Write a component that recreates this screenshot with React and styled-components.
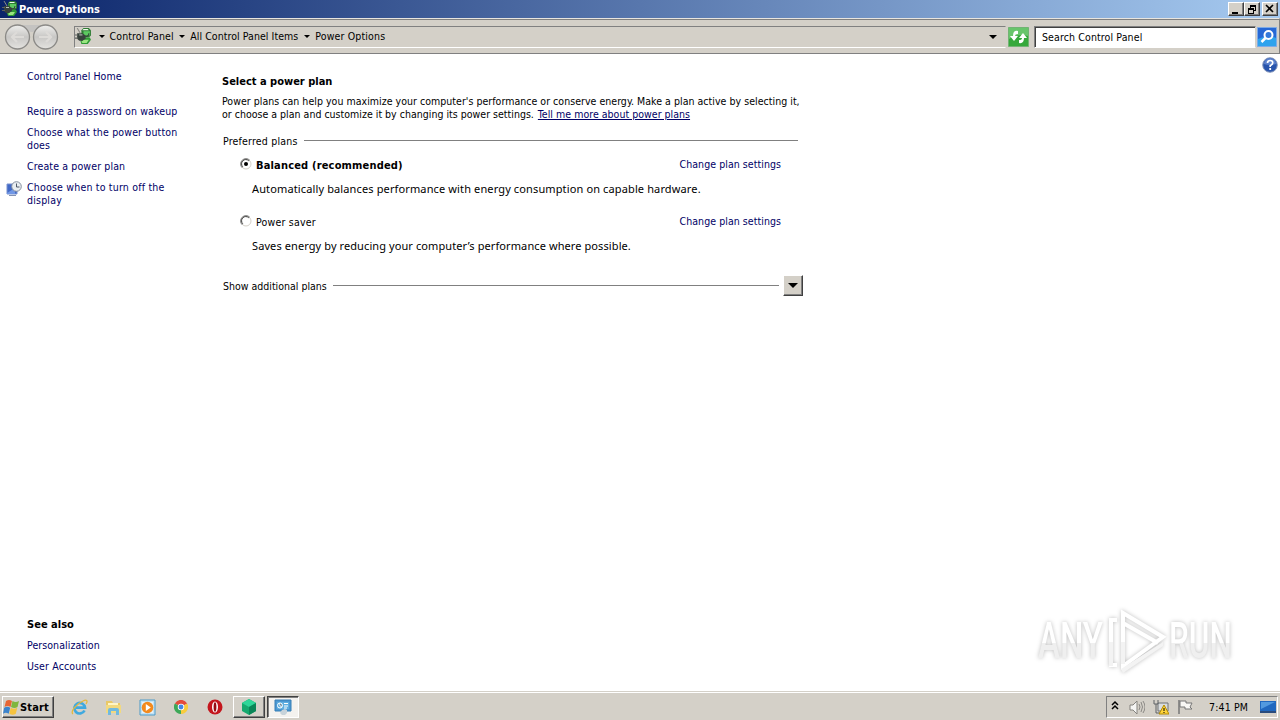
import React from "react";
import styled, { createGlobalStyle, css } from "styled-components";

const GlobalStyle = createGlobalStyle`
  * {
    box-sizing: border-box;
  }
  body {
    margin: 0;
    overflow: hidden;
    background: #fff;
    color: #000;
    font-family: "DejaVu Sans Condensed", "DejaVu Sans", sans-serif;
    font-size: 10.5px;
    line-height: 13px;
  }
`;

const raised = css`
  background: #d4d0c8;
  border: 1px solid;
  border-color: #fff #404040 #404040 #fff;
  box-shadow: inset -1px -1px 0 #808080;
`;

const Window = styled.div`
  display: flex;
  flex-direction: column;
  width: 1280px;
  height: 720px;
  position: relative;
`;

const TitleBar = styled.div`
  display: flex;
  align-items: center;
  height: 18px;
  padding: 0 2px;
  color: #fff;
  background: linear-gradient(to right, #0a246a, #a6caf0);
`;

const Text = styled.span`
  display: block;
  white-space: nowrap;
  letter-spacing: ${(props) => props.$spacing || 0}px;
  font-size: ${(props) => (props.$bold ? "11px" : "inherit")};
  font-weight: ${(props) => (props.$bold ? "bold" : "normal")};
`;

const TitleText = styled(Text)`
  flex: 1;
  margin-left: 1px;
`;

const WindowButton = styled.button`
  ${raised}
  width: 16px;
  height: 14px;
  padding: 0;
  margin-left: ${(props) => props.$gap || 0}px;
  display: flex;
  align-items: center;
  justify-content: center;
`;

const Toolbar = styled.div`
  display: flex;
  align-items: center;
  height: 36px;
  padding: 2px 2px 1px 4px;
  background: #d4d0c8;
  border-top: 1px solid #e8e5df;
  border-bottom: 1px solid #808080;
  border-right: 1px solid #808080;
  box-shadow: inset 0 1px 0 #808080;
`;

const NavButtons = styled.svg`
  width: 56px;
  height: 28px;
  margin-right: 14px;
`;

const AddressBar = styled.div`
  display: flex;
  align-items: center;
  width: 932px;
  height: 22px;
  border: 1px solid;
  border-color: #808080 transparent #fff #808080;
`;

const Crumb = styled.div`
  display: flex;
  align-items: center;
`;

const Caret = styled.span`
  width: 0;
  height: 0;
  border: solid transparent;
  border-width: ${(props) => props.$size || 3}px;
  border-top-color: #000;
  border-bottom: 0;
  margin: ${(props) => props.$margin || 0};
`;

const Refresh = styled.svg`
  width: 21px;
  height: 20px;
  margin-left: 2px;
`;

const SearchField = styled.div`
  width: 222px;
  height: 22px;
  margin-left: 5px;
  padding: 4px 7px;
  background: #fff;
  border: 1px solid;
  border-color: #808080 #d4d0c8 #fff #808080;
  box-shadow: inset 1px 1px 0 #404040;
`;

const SearchButton = styled.svg`
  width: 20px;
  height: 20px;
  margin-left: 1px;
`;

const Body = styled.div`
  display: flex;
  flex: 1;
`;

const Sidebar = styled.aside`
  display: flex;
  flex-direction: column;
  width: 222px;
  padding: 16px 0 18px 6px;
  color: #000066;
`;

const TaskLink = styled.div`
  display: flex;
  margin-bottom: ${(props) => props.$after || 8}px;
`;

const IconSlot = styled.div`
  width: 21px;
  height: 13px;
`;

const SeeAlso = styled.div`
  margin-top: auto;
  padding-left: 21px;
  display: flex;
  flex-direction: column;
  gap: 8px;
`;

const Heading = styled(Text)`
  color: #000;
`;

const Main = styled.main`
  width: 582px;
  padding-top: 21px;
`;

const Intro = styled.div`
  margin: 7px 0 13px;
`;

const IntroLine = styled.div`
  display: flex;
`;

const Anchor = styled(Text)`
  color: #000066;
  text-decoration: underline;
  margin-left: ${(props) => props.$indent || 0}px;
`;

const Group = styled.div`
  display: flex;
  align-items: center;
  height: 15px;
  padding: 0 ${(props) => props.$right || 0}px 0 1px;
`;

const Rule = styled.div`
  flex: 1;
  height: 1px;
  margin: 0 0 2px 6px;
  background: #808080;
`;

const Plan = styled.div`
  margin: ${(props) => (props.$first ? 10 : 21)}px 0 0 18px;
`;

const Plans = styled.div`
  margin-bottom: 27px;
`;

const PlanRow = styled.div`
  display: flex;
  align-items: flex-start;
  height: 13px;
`;

const Radio = styled.svg`
  width: 12px;
  height: 12px;
  margin: -1px 4px 0 0;
`;

const ChangeLink = styled(Text)`
  color: #000066;
  margin: -1px 23px 0 auto;
`;

const Description = styled(Text)`
  margin: 10px 0 0 12px;
  font-family: "Noto Sans", sans-serif;
  font-size: 11px;
`;

const ExpandButton = styled.button`
  ${raised}
  display: flex;
  align-items: center;
  justify-content: center;
  width: 20px;
  height: 21px;
  padding: 0;
  margin: 0 0 2px 4px;
`;

const HelpIcon = styled.svg`
  width: 16px;
  height: 16px;
  margin: 3px 2px 0 auto;
`;

const Watermark = styled.div`
  position: absolute;
  left: 1038px;
  top: 606px;
  width: 196px;
  height: 70px;
  display: flex;
  align-items: center;
  filter: drop-shadow(0 0 2px rgba(0, 0, 0, 0.26));
`;

const MarkWord = styled.span`
  flex: none;
  width: 110px;
  margin-right: ${(props) => props.$width - 110}px;
  font-family: Roboto, sans-serif;
  font-size: 50px;
  font-weight: 500;
  line-height: 60px;
  transform: scaleX(${(props) => props.$scale});
  transform-origin: left;
  background: linear-gradient(#fff 53%, #efefef 53%);
  background-clip: text;
  color: transparent;
`;

const MarkLogo = styled.svg`
  width: 64px;
  height: 66px;
  flex: none;
`;

const Taskbar = styled.footer`
  display: flex;
  align-items: center;
  height: 29px;
  padding: 2px 2px 0;
  background: #d4d0c8;
  border-top: 1px solid #d4d0c8;
  box-shadow: inset 0 1px 0 #fff;
`;

const StartButton = styled.button`
  ${raised}
  display: flex;
  align-items: center;
  width: 52px;
  height: 22px;
  padding: 0;
  margin-right: 8px;
  font: inherit;
`;

const TaskItem = styled.div`
  display: flex;
  align-items: center;
  justify-content: center;
  width: 34px;
  height: 22px;
`;

const TaskButton = styled(TaskItem)`
  ${raised}
  width: 32px;
  margin: 0 1px;
  ${(props) =>
    props.$active &&
    css`
      background: #f4f2ef;
      border-color: #404040 #fff #fff #404040;
      box-shadow: inset 1px 1px 0 #808080;
    `}
`;

const Tray = styled.div`
  display: flex;
  align-items: center;
  width: 172px;
  height: 22px;
  margin-left: auto;
  padding: 0 1px 0 4px;
  border: 1px solid;
  border-color: #808080 #fff #fff #808080;
`;

const TrayIcon = styled.svg`
  width: ${(props) => props.$size || 16}px;
  height: 16px;
  margin-right: ${(props) => props.$after || 0}px;
`;

const Clock = styled(Text)`
  flex: 1;
`;

const PowerIcon = ({ size = 16 }) => (
  <svg width={size} height={size} viewBox="0 0 16 16">
    <path d="M6 2l2-2h5l2 2v5l-2 2H6z" fill="#2f7d34" />
    <path d="M8 1h4l1 1H7z" fill="#eef8ea" />
    <path d="M8 3h6v4H8z" fill="#5cc860" />
    <path d="M5 12l3-3h6l1 2-3 4H6z" fill="#2f9a35" />
    <path d="M6 13l2-2h5l-2 3H7z" fill="#9be680" />
    <path d="M2 5h5l3 2v3l-3 2H4l-2-2z" fill="#38423d" />
    <path d="M0 6h3v1H0zM0 9h3v1H0z" fill="#5d605e" />
    <path d="M4 6h3v1H4z" fill="#b7c3b8" />
    <path d="M10 8q3 0 3-3" fill="none" stroke="#38423d" />
    <path d="M2 0l3 5" stroke="#8a8a86" />
  </svg>
);

const DisplayIcon = () => (
  <svg width="16" height="16" viewBox="0 0 16 16">
    <path d="M1 3h10v10H1z" fill="#4169c7" stroke="#7892cf" />
    <path d="M1 12l8-5v6H1z" fill="#7298e5" />
    <path d="M3 14h7v1H3z" fill="#8292b3" />
    <circle cx="10.5" cy="5.5" r="4.8" fill="#e9edf0" stroke="#858f9e" />
    <path d="M10.5 2.5v3.5h3" fill="none" stroke="#4e5968" />
  </svg>
);

const WindowsFlag = () => (
  <svg width="17" height="17" viewBox="0 0 17 17">
    <path d="M3 2q3-2 6 0L7.5 8q-3-2-6 0z" fill="#e76635" />
    <path d="M9.5 2q3 2 6.5 0l-1.5 6q-3 2-6.5 0z" fill="#80b63d" />
    <path d="M1.2 8.7q3-2 6 0l-1.5 6q-3-2-5.7 0z" fill="#3b83cc" />
    <path d="M7.8 8.7q3 2 6.5 0l-1.5 6q-3 2-6.5 0z" fill="#f6c33e" />
  </svg>
);

const ExplorerIE = () => (
  <svg width="17" height="17" viewBox="0 0 17 17">
    <path
      d="M13.5 11.5A5.3 5.3 0 1 1 14 8.7H5"
      fill="none"
      stroke="#3fa9df"
      strokeWidth="2.7"
    />
    <path
      d="M2 15C-1 13 5 5 12 2c4-2 5 0 3 3"
      fill="none"
      stroke="#e4b83c"
      strokeWidth="1.3"
    />
  </svg>
);

const FolderIcon = () => (
  <svg width="17" height="17" viewBox="0 0 17 17">
    <path d="M1 2h6l1 2h7v10H1z" fill="#e9c867" />
    <path d="M3 4h10v8H3z" fill="#fff5c6" />
    <path d="M1 6h15v8H1z" fill="#f2d980" />
    <path d="M3 16v-5q0-2 2-2h7q2 0 2 2v5h-3v-4H6v4z" fill="#71b9df" />
  </svg>
);

const PlayerIcon = () => (
  <svg width="17" height="17" viewBox="0 0 17 17">
    <path d="M1 1h15v15H1z" fill="#c4e2f3" stroke="#4c9bc8" />
    <path d="M3 3h11v11H3z" fill="#e4f2fa" />
    <circle cx="8.5" cy="8.5" r="5.8" fill="#f38a1d" />
    <path d="M6.8 5l5 3.5-5 3.5z" fill="#fff" />
  </svg>
);

const ChromeIcon = () => (
  <svg width="14" height="14" viewBox="0 0 16 16">
    <path d="M8 8L1 4a8 8 0 0 1 14 0z" fill="#e44b3b" />
    <path d="M8 8l7-4a8 8 0 0 1-7 12z" fill="#f8cc3d" />
    <path d="M8 8v8A8 8 0 0 1 1 4z" fill="#3da858" />
    <circle cx="8" cy="8" r="3.7" fill="#fff" />
    <circle cx="8" cy="8" r="2.8" fill="#4387e5" />
  </svg>
);

const OperaIcon = () => (
  <svg width="16" height="16" viewBox="0 0 16 16">
    <circle cx="8" cy="8" r="7.5" fill="#c4161d" />
    <ellipse cx="8" cy="8" rx="3" ry="5.6" fill="#fff" />
    <ellipse cx="8" cy="8" rx="1.4" ry="4.8" fill="#970d13" />
  </svg>
);

const CubeIcon = () => (
  <svg width="16" height="16" viewBox="0 0 16 16">
    <path d="M8 0l7 4v8l-7 4-7-4V4z" fill="#16a96f" />
    <path d="M8 0l7 4-7 4-7-4z" fill="#2fd699" />
    <path d="M8 8l7-4v8l-7 4z" fill="#0a8557" />
  </svg>
);

const ControlPanelIcon = () => (
  <svg width="18" height="18" viewBox="0 0 18 18">
    <path d="M1 2h16v11H1z" fill="#4c98d2" stroke="#367eb6" />
    <path d="M3 4h12v7H3z" fill="#5faee0" />
    <circle cx="6" cy="7.5" r="2.5" fill="none" stroke="#fff" />
    <path d="M6 5v3h2M10 5.5h4M10 8h4M10 10h3" stroke="#fff" />
    <path d="M6 15l2-3 3-1 2 1v3l-2 2H8z" fill="#c8d3da" />
  </svg>
);

const RadioButton = ({ checked = false }) => (
  <Radio viewBox="0 0 12 12">
    <circle cx="6" cy="6" r="5" fill="#fff" stroke="#d4d0c8" />
    <path d="M2.2 9.8A5.3 5.3 0 0 1 9.8 2.2" fill="none" stroke="#808080" />
    <path d="M2.8 8.8A4.2 4.2 0 0 1 8.8 2.8" fill="none" stroke="#404040" />
    {checked && <circle cx="6" cy="6" r="2" />}
  </Radio>
);

const tasks = [
  { lines: ["Control Panel Home"], after: 22, spacing: 0.06 },
  { lines: ["Require a password on wakeup"], spacing: 0.13 },
  { lines: ["Choose what the power button", "does"], spacing: 0.16 },
  { lines: ["Create a power plan"], spacing: 0.13 },
  {
    lines: ["Choose when to turn off the", "display"],
    spacing: 0.2,
    icon: <DisplayIcon />,
  },
];

const PlanOption = ({
  name,
  description,
  checked,
  spacing,
  descSpacing,
}) => (
  <Plan $first={checked}>
    <PlanRow>
      <RadioButton checked={checked} />
      <Text $bold={checked} $spacing={spacing}>
        {name}
      </Text>
      <ChangeLink $spacing={0.06}>Change plan settings</ChangeLink>
    </PlanRow>
    <Description $spacing={descSpacing}>{description}</Description>
  </Plan>
);

const App = () => (
  <Window>
    <GlobalStyle />
    <TitleBar>
      <PowerIcon />
      <TitleText $bold $spacing={-0.05}>
        Power Options
      </TitleText>
      <WindowButton>
        <svg width="10" height="9">
          <path d="M1 7h6v2H1z" />
        </svg>
      </WindowButton>
      <WindowButton>
        <svg width="10" height="10" shapeRendering="crispEdges">
          <path d="M3 1h6v2H3zM3 3h1v1H3zM8 3h1v4H7V6h1zM1 4h6v2H1zM1 6h1v3h4V6h1v4H1z" />
        </svg>
      </WindowButton>
      <WindowButton $gap={2}>
        <svg width="10" height="10">
          <path d="M1 1l7 7M8 1L1 8" stroke="#000" strokeWidth="1.6" />
        </svg>
      </WindowButton>
    </TitleBar>

    <Toolbar>
      <NavButtons viewBox="0 0 56 28">
        <defs>
          <linearGradient id="nav" x2="0" y2="1">
            <stop stopColor="#efefed" />
            <stop offset="0.5" stopColor="#c8c7c5" />
            <stop offset="1" stopColor="#e4e3e0" />
          </linearGradient>
        </defs>
        <path d="M14 2h28v4q-14 6-28 0z" fill="#c4c3c1" />
        <g fill="url(#nav)" stroke="#8b8a87" strokeWidth="1.3">
          <circle cx="13.5" cy="14" r="12" />
          <circle cx="41.5" cy="14" r="12" />
        </g>
        <g fill="none" stroke="#dddbd8" strokeWidth="2.2">
          <path d="M20 14H8m5-5l-5 5 5 5" />
          <path d="M35 14h12m-5-5l5 5-5 5" />
        </g>
      </NavButtons>
      <AddressBar>
        <PowerIcon size={17} />
        <Crumb>
          <Caret $margin="0 5px 0 6.5px" />
          <Text $spacing={0.13}>Control Panel</Text>
        </Crumb>
        <Crumb>
          <Caret $margin="0 5px 0 5.5px" />
          <Text $spacing={0.06}>All Control Panel Items</Text>
        </Crumb>
        <Crumb>
          <Caret $margin="0 5px 0 6px" />
          <Text $spacing={0.15}>Power Options</Text>
        </Crumb>
        <Caret $size={4} $margin="1px 8px 0 auto" />
      </AddressBar>
      <Refresh viewBox="0 0 21 20">
        <path d="M.5.5h20v19H.5z" fill="#36a83b" stroke="#72b374" />
        <path d="M1 1h19v8Q10 6 1 12z" fill="#68c56b" />
        <path
          d="M10 4Q5 3 5 9H2l4 5 4-5H7q0-2 3-2zM11 16q5 1 5-5h3l-4-5-4 5h3q0 2-3 2z"
          fill="#fff"
        />
      </Refresh>
      <SearchField>
        <Text $spacing={0.12}>Search Control Panel</Text>
      </SearchField>
      <SearchButton viewBox="0 0 20 20">
        <path d="M.5.5h19v19H.5z" fill="#2768d5" stroke="#7eabe6" />
        <path d="M1 12q10-5 18-1v8H1z" fill="#2fa3ed" />
        <circle cx="11.5" cy="8" r="4" fill="#3479db" stroke="#fff" strokeWidth="2" />
        <path d="M8.5 11l-4 4" stroke="#fff" strokeWidth="2.5" />
      </SearchButton>
    </Toolbar>

    <Body>
      <Sidebar>
        {tasks.map((task) => (
          <TaskLink key={task.lines[0]} $after={task.after}>
            <IconSlot>{task.icon}</IconSlot>
            <div>
              {task.lines.map((line) => (
                <Text key={line} $spacing={task.spacing}>
                  {line}
                </Text>
              ))}
            </div>
          </TaskLink>
        ))}
        <SeeAlso>
          <Heading $bold $spacing={0.02}>
            See also
          </Heading>
          <Text $spacing={0.08}>Personalization</Text>
          <Text $spacing={0.14}>User Accounts</Text>
        </SeeAlso>
      </Sidebar>
      <Main>
        <Heading $bold>Select a power plan</Heading>
        <Intro>
          <IntroLine>
            <Text $spacing={0.035}>
              Power plans can help you maximize your computer's performance or
              conserve energy. Make a plan active by selecting it,
            </Text>
          </IntroLine>
          <IntroLine>
            <Text $spacing={0.015}>
              or choose a plan and customize it by changing its power settings.
            </Text>
            <Anchor $indent={4} $spacing={0.03}>
              Tell me more about power plans
            </Anchor>
          </IntroLine>
        </Intro>
        <Group $right={6}>
          <Text $spacing={0.2}>Preferred plans</Text>
          <Rule />
        </Group>
        <Plans>
          <PlanOption
            checked
            name="Balanced (recommended)"
            spacing={0.17}
            description="Automatically balances performance with energy consumption on capable hardware."
            descSpacing={0.13}
          />
          <PlanOption
            name="Power saver"
            spacing={0.22}
            description="Saves energy by reducing your computer’s performance where possible."
            descSpacing={0.095}
          />
        </Plans>
        <Group $right={1}>
          <Text>Show additional plans</Text>
          <Rule />
          <ExpandButton>
            <Caret $size={5} />
          </ExpandButton>
        </Group>
      </Main>
      <HelpIcon viewBox="0 0 16 16">
        <circle cx="8" cy="8" r="7.3" fill="#2854ac" stroke="#8b9bbd" />
        <path d="M2 7a6 6 0 0 1 12 0q-6 2-12 0z" fill="#5d82cc" />
        <path
          d="M5.5 6q0-2.5 2.7-2.5T10.7 6Q10.7 7.3 8.2 8.8V10"
          fill="none"
          stroke="#fff"
          strokeWidth="1.7"
        />
        <path d="M7.3 11h1.8v2H7.3z" fill="#fff" />
      </HelpIcon>
    </Body>

    <Watermark>
      <MarkWord $width={67} $scale={0.66}>
        ANY
      </MarkWord>
      <MarkLogo viewBox="0 0 64 66">
        <g fill="none" stroke="#fff" strokeWidth="4">
          <path d="M18 5l40 24-40 29z" />
          <path d="M12 12H6v45h6M18 15l35 20" />
        </g>
        <path d="M16 61l42-27v4L18 65z" fill="#f3f3f3" />
        <path d="M4 34h4v24H4zM16 34h4v22h-4z" fill="#f3f3f3" />
      </MarkLogo>
      <MarkWord $width={66} $scale={0.63}>
        RUN
      </MarkWord>
    </Watermark>

    <Taskbar>
      <StartButton>
        <WindowsFlag />
        <Text $bold $spacing={0.15}>
          Start
        </Text>
      </StartButton>
      <TaskItem>
        <ExplorerIE />
      </TaskItem>
      <TaskItem>
        <FolderIcon />
      </TaskItem>
      <TaskItem>
        <PlayerIcon />
      </TaskItem>
      <TaskItem>
        <ChromeIcon />
      </TaskItem>
      <TaskItem>
        <OperaIcon />
      </TaskItem>
      <TaskButton>
        <CubeIcon />
      </TaskButton>
      <TaskButton $active>
        <ControlPanelIcon />
      </TaskButton>
      <Tray>
        <TrayIcon $size={8} viewBox="0 0 8 16" $after={10}>
          <path d="M1 6l3-3 3 3M1 10l3-3 3 3" fill="none" stroke="#000" strokeWidth="1.5" />
        </TrayIcon>
        <TrayIcon viewBox="0 0 16 16" $after={8}>
          <path d="M1 6h3l4-4v13l-4-4H1z" fill="#f5f5f3" stroke="#85837f" />
          <path
            d="M10 5q2 3 0 6M12 3q3 5 0 10M14 2q4 6 0 12"
            fill="none"
            stroke="#8b8985"
          />
        </TrayIcon>
        <TrayIcon viewBox="0 0 16 16" $after={8}>
          <path d="M5 4h10v8H5z" fill="#d9dcde" stroke="#6f7276" />
          <path d="M1 1v4h4V1M3 5v9h5" fill="none" stroke="#5e6267" />
          <path d="M11 6l5 9H6z" fill="#ffd43b" stroke="#b38a00" />
          <path d="M10.5 9h1v3h-1zM10.5 13h1v1h-1z" />
        </TrayIcon>
        <TrayIcon viewBox="0 0 16 16" $after={16}>
          <path d="M2 1v14" stroke="#777" strokeWidth="1.5" />
          <path d="M3 2h6v2h6l-2 4 2 2H8V8H3z" fill="#f8f7f4" stroke="#777" />
        </TrayIcon>
        <Clock $spacing={0.15}>7:41 PM</Clock>
        <TrayIcon viewBox="0 0 16 16">
          <path d="M0 2h16v10H0z" fill="#2068bf" />
          <path d="M1 3h14L1 10z" fill="#5199df" />
          <path d="M0 12h16v2H0z" fill="#294b7d" />
        </TrayIcon>
      </Tray>
    </Taskbar>
  </Window>
);

export default App;
